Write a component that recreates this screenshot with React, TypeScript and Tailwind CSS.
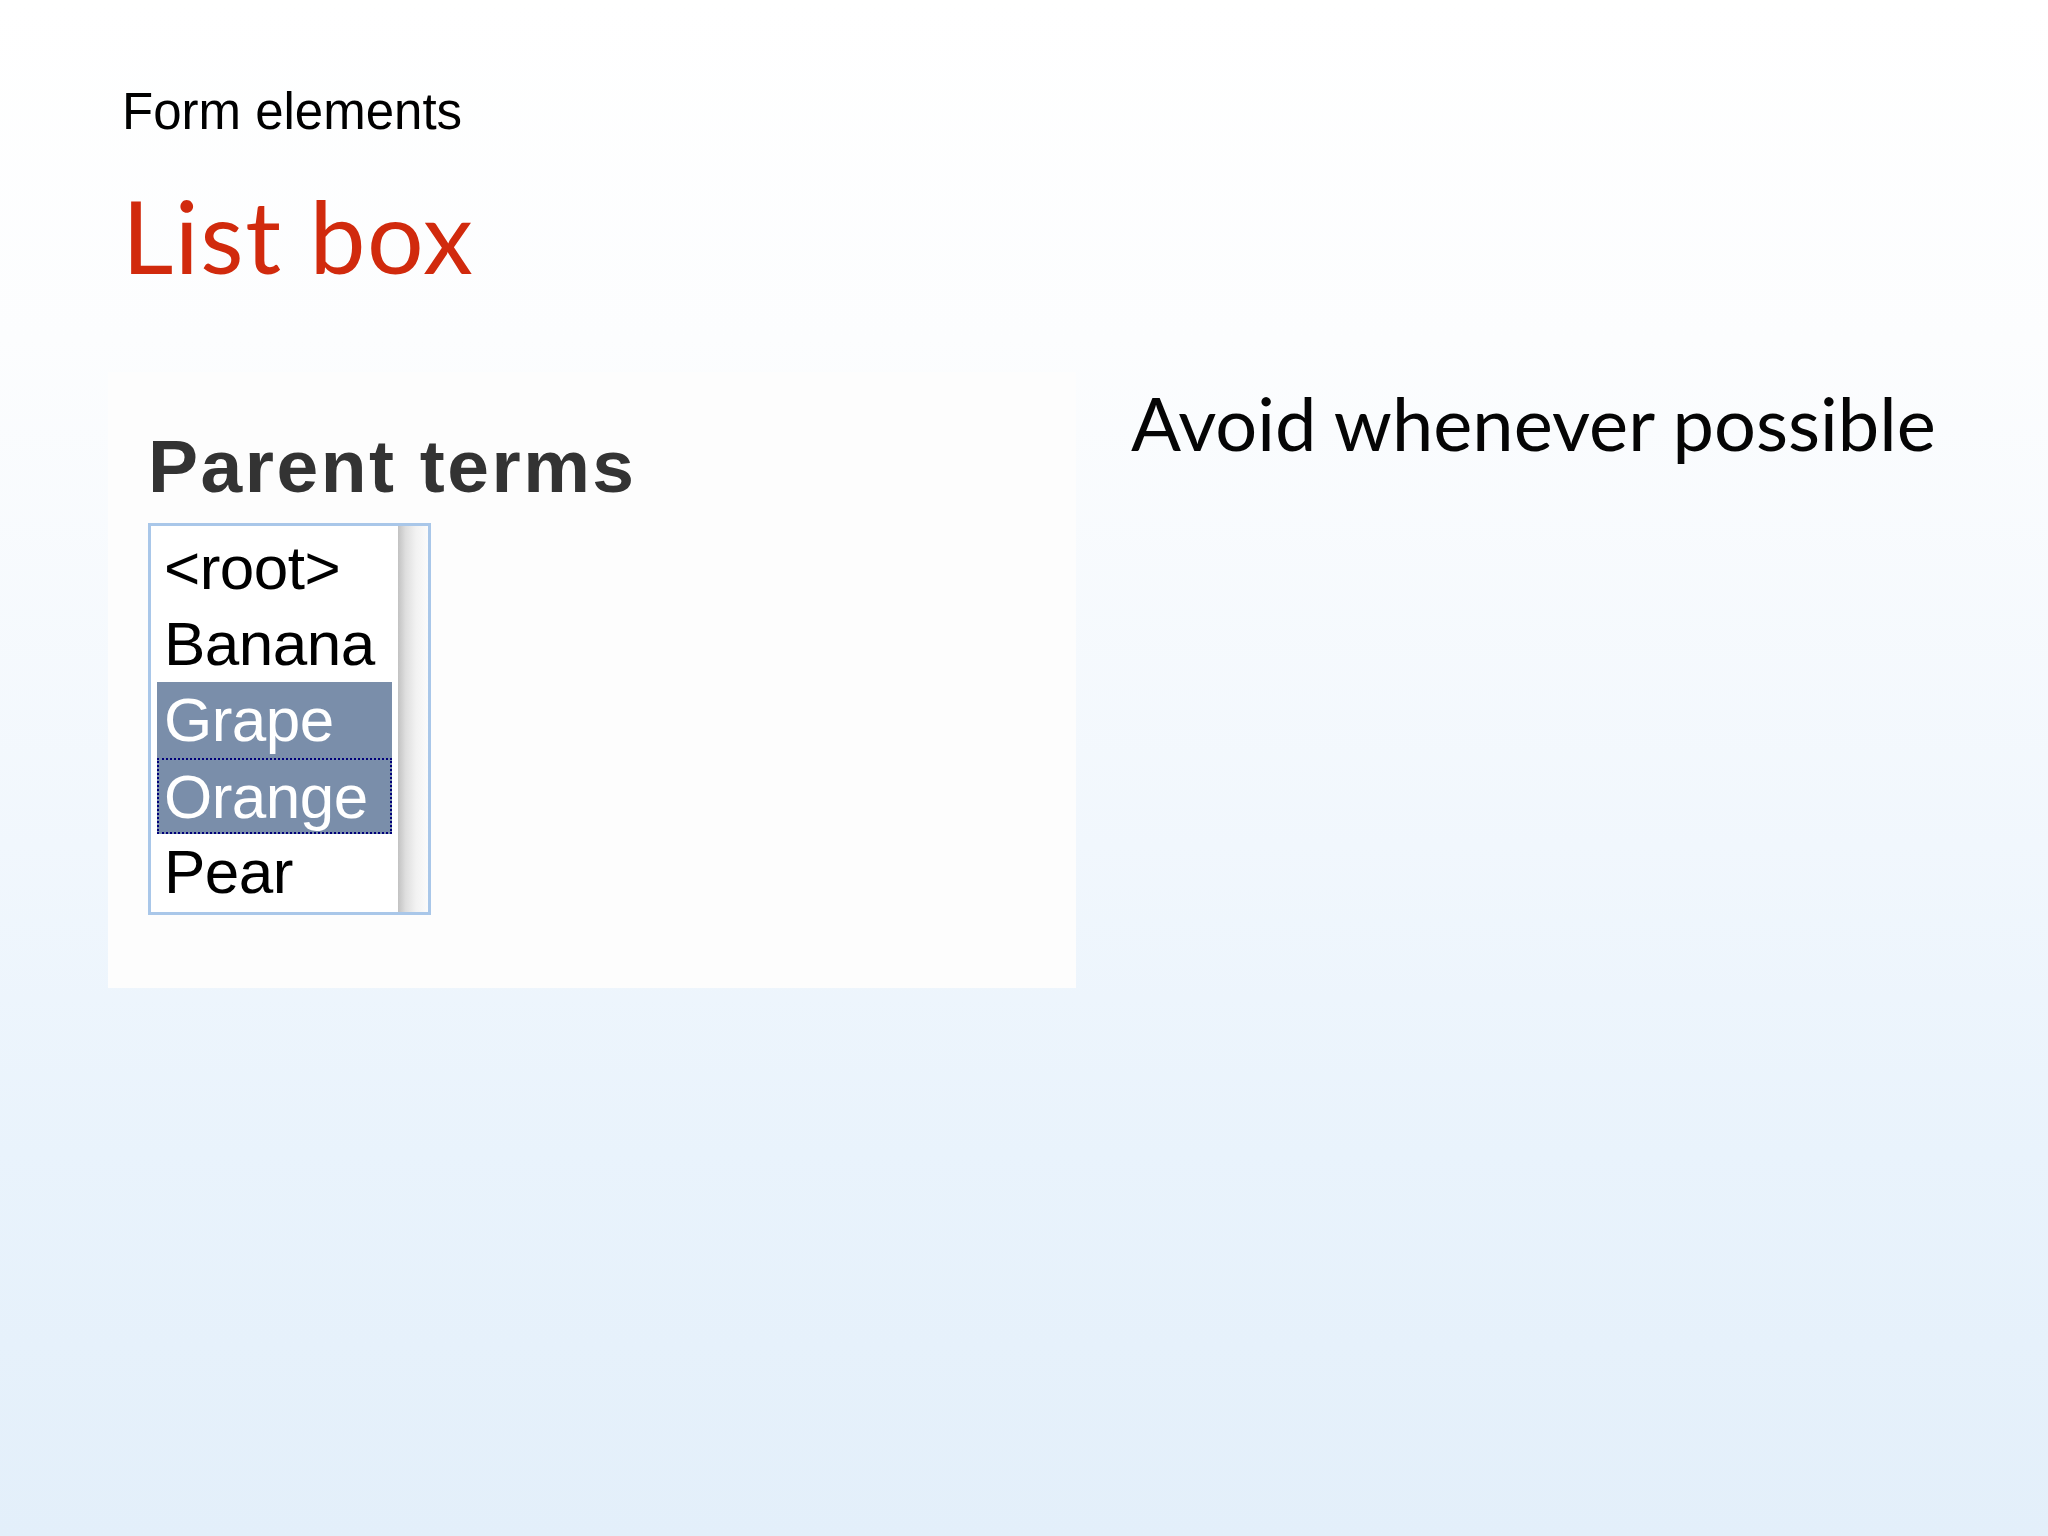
import React from 'react';

const items = [
  { label: '<root>', selected: false, focused: false },
  { label: 'Banana', selected: false, focused: false },
  { label: 'Grape', selected: true, focused: false },
  { label: 'Orange', selected: true, focused: true },
  { label: 'Pear', selected: false, focused: false },
];

function ListBox() {
  return (
    <div className="flex h-[392px] w-[283px] border-[3px] border-[#a9c7e9] bg-white">
      <div className="flex w-[247px] flex-col pl-[6px] pr-[6px] pt-[4px]">
        {items.map((item) => (
          <div
            key={item.label}
            className={
              item.selected
                ? item.focused
                  ? 'h-[76px] border-2 border-dotted border-[#00007a] bg-[#7a8eaa] pl-[5px] text-[62px] leading-[74px] tracking-[-0.5px] text-white'
                  : 'h-[76px] bg-[#7a8eaa] pl-[7px] text-[62px] leading-[76px] tracking-[-0.5px] text-white'
                : 'h-[76px] pl-[7px] text-[62px] leading-[76px] tracking-[-0.5px] text-black'
            }
            style={{ fontFamily: '"Liberation Sans", Arial, sans-serif' }}
          >
            {item.label}
          </div>
        ))}
      </div>
      <div className="w-[30px] bg-[linear-gradient(90deg,#c2c2c2_0%,#dedede_25%,#f2f2f2_60%,#fbfbfb_100%)]" />
    </div>
  );
}

export default function App() {
  return (
    <div className="h-[1536px] w-[2048px] overflow-hidden bg-[linear-gradient(180deg,#ffffff_0%,#fcfdfe_22%,#f1f7fd_55%,#e9f3fc_75%,#e3effa_100%)]">
      <div className="pl-[122px] pt-[82px]">
        <p
          className="text-[51px] leading-[60px] text-black"
          style={{ fontFamily: '"Liberation Sans", Arial, sans-serif' }}
        >
          Form elements
        </p>
        <h1
          className="mt-[33px] text-[100px] leading-[120px] tracking-[1.5px] text-[#d12a0d]"
          style={{ fontFamily: 'Lato, "Open Sans", sans-serif' }}
        >
          List box
        </h1>
      </div>

      <div className="mt-[77px] flex items-start pl-[108px]">
        <div className="h-[616px] w-[968px] bg-[#fdfdfd] pl-[40px] pt-[54px]">
          <h2
            className="text-[75px] font-bold leading-[80px] tracking-[2.5px] text-[#333333]"
            style={{ fontFamily: '"Liberation Sans", Arial, sans-serif' }}
          >
            Parent terms
          </h2>
          <div className="mt-[17px]">
            <ListBox />
          </div>
        </div>
        <p
          className="ml-[55px] mt-[6px] text-[74px] leading-[89px] text-[#050505]"
          style={{ fontFamily: 'Lato, "Open Sans", sans-serif' }}
        >
          Avoid whenever possible
        </p>
      </div>
    </div>
  );
}
